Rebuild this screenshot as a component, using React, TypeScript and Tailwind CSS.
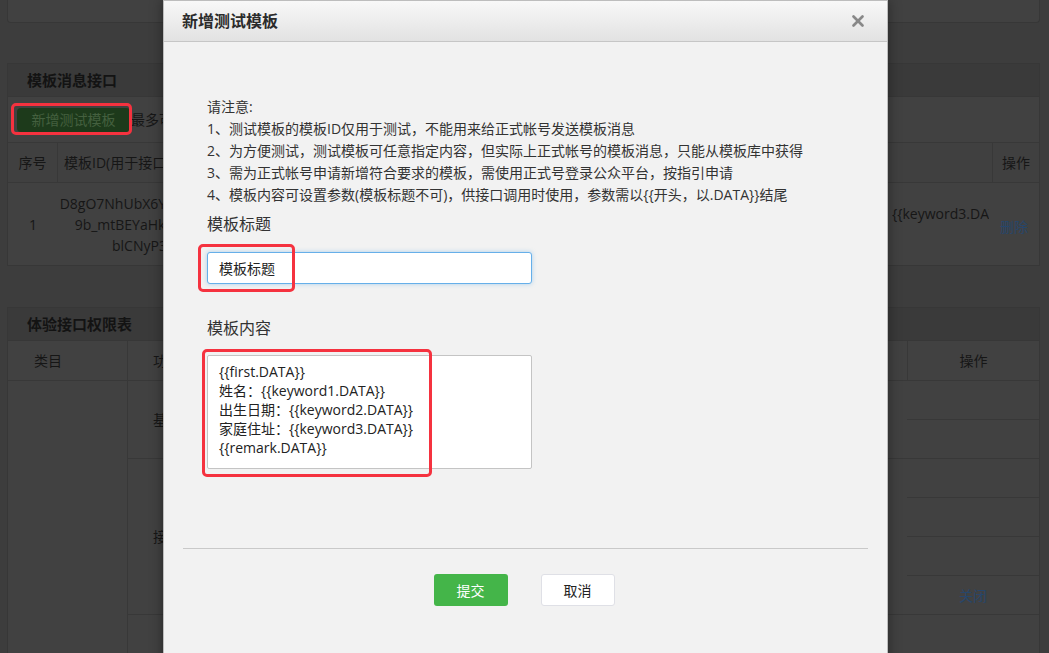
import { X } from 'lucide-react';

const font = { fontFamily: '"Open Sans", "Noto Sans CJK SC", sans-serif' };

// Underlying page (dimmed by the modal's mask)
function BackgroundPage() {
  return (
    <div className="pl-[7px] w-[1040px] text-[14px] text-[#161616]">
      {/* tail of the panel above */}
      <div className="h-[23px] border-x border-b border-[#373737] bg-[#414141] rounded-b-sm" />

      {/* 模板消息接口 */}
      <div className="mt-[40px] border border-[#373737] bg-[#414141]">
        <div className="h-[33px] flex items-center pl-[19px] bg-[#3a3a3a] border-b border-[#373737] font-bold text-[15px] text-[#131313]">
          模板消息接口
        </div>
        <div className="h-[45px] flex items-center pl-[9px]">
          <div className="w-[113px] h-[24px] flex items-center justify-center bg-[#1d3a1b] rounded-sm text-[#44603f] text-[14px]">
            新增测试模板
          </div>
          <span className="ml-[1px]">最多可新增10个测试模板</span>
        </div>
        <div className="flex h-[41px] border-y border-[#383838] bg-[#404040]">
          <div className="w-[50px] flex items-center justify-center border-r border-[#383838]">序号</div>
          <div className="flex-1 flex items-center pl-[6px]">模板ID(用于接口调用)</div>
          <div className="w-[47px] flex items-center justify-center border-l border-[#383838]">操作</div>
        </div>
        <div className="flex h-[82px]">
          <div className="w-[50px] flex items-center justify-center pt-[1px]">1</div>
          <div className="w-[260px] flex flex-col items-center justify-center leading-[21px] pt-[1px] whitespace-nowrap">
            <span>D8gO7NhUbX6Yx0Mo-pqLw3nZk8TrWa</span>
            <span>9b_mtBEYaHkFoR3jUfkzE4TghVs2q</span>
            <span>blCNyP3gdA7xQe2mKo</span>
          </div>
          <div className="flex-1 flex justify-end">
            <div className="w-[97px] overflow-hidden pt-[20px] whitespace-nowrap">{'{{keyword3.DATA}}'}</div>
          </div>
          <div className="w-[50px] flex items-center justify-center pt-[4px] text-[#27466b]">删除</div>
        </div>
      </div>

      {/* 体验接口权限表 */}
      <div className="mt-[41px] border border-[#373737] bg-[#414141]">
        <div className="h-[33px] flex items-center pl-[19px] bg-[#3a3a3a] border-b border-[#373737] font-bold text-[15px] text-[#131313]">
          体验接口权限表
        </div>
        <div className="flex h-[40px] border-b border-[#383838]">
          <div className="w-[120px] flex items-center pl-[26px] border-r border-[#383838]">类目</div>
          <div className="flex-1 flex items-center pl-[25px]">功能</div>
          <div className="w-[132px] flex items-center justify-center border-l border-[#383838]">操作</div>
        </div>
        <div className="flex">
          <div className="w-[120px] border-r border-[#383838]" />
          <div className="flex-1 flex flex-col">
            <div className="h-[78px] flex items-center pl-[25px] border-b border-[#383838]">基础支持</div>
            <div className="h-[156px] flex items-center pl-[25px] border-b border-[#383838]">接收消息</div>
            <div className="h-[60px]" />
          </div>
          <div className="w-[132px] flex flex-col">
            {['', '', '', '', '', '关闭', ''].map((t, i) => (
              <div
                key={i}
                className="h-[39px] flex items-center justify-center border-b border-[#383838] text-[#27466b]"
              >
                {t}
              </div>
            ))}
          </div>
        </div>
      </div>
    </div>
  );
}

function Modal() {
  return (
    <div className="absolute left-[163px] top-0 w-[725px] h-[720px] bg-[#f2f2f2] border border-[#bdbdbd] shadow-[0_0_12px_rgba(0,0,0,0.4)] text-[#333]">
      <div className="h-[41px] flex items-center justify-between px-[18px] bg-gradient-to-b from-[#f8f8f8] to-[#e2e2e2] border-b border-[#c6c6c6]">
        <span className="font-bold text-[16px] text-[#2b2b2b]">新增测试模板</span>
        <X size={18} strokeWidth={3.6} className="text-[#888] mr-[2px]" />
      </div>

      <div className="px-[43px] pt-[54px]">
        <div className="text-[14px] leading-[22px]">
          <p>请注意:</p>
          <p>1、测试模板的模板ID仅用于测试，不能用来给正式帐号发送模板消息</p>
          <p>2、为方便测试，测试模板可任意指定内容，但实际上正式帐号的模板消息，只能从模板库中获得</p>
          <p>3、需为正式帐号申请新增符合要求的模板，需使用正式号登录公众平台，按指引申请</p>
          <p>4、模板内容可设置参数(模板标题不可)，供接口调用时使用，参数需以{'{{'}开头，以.DATA{'}}'}结尾</p>
        </div>

        <div className="mt-[6px] text-[16px] leading-[24px]">模板标题</div>
        <div className="mt-[16px] w-[325px] h-[32px] flex items-center pl-[11px] bg-white border border-[#66afe9] rounded-[3px] shadow-[0_0_4px_rgba(102,175,233,0.5)] text-[14px] text-[#222]">
          模板标题
        </div>

        <div className="mt-[32px] text-[16px] leading-[24px]">模板内容</div>
        <div className="mt-[15px] w-[325px] h-[114px] bg-white border border-[#c4c4c4] rounded-[2px] pl-[11px] pt-[6px] text-[14px] leading-[19px] text-[#222]">
          <p>{'{{first.DATA}}'}</p>
          <p>姓名：{'{{keyword1.DATA}}'}</p>
          <p>出生日期：{'{{keyword2.DATA}}'}</p>
          <p>家庭住址：{'{{keyword3.DATA}}'}</p>
          <p>{'{{remark.DATA}}'}</p>
        </div>
      </div>

      <div className="mx-[19px] mt-[79px] border-t border-[#c9c9c9]" />

      <div className="mt-[25px] flex justify-center gap-[33px] pr-[3px]">
        <div className="w-[74px] h-[32px] flex items-center justify-center rounded-[3px] bg-[#44b549] text-white text-[14px]">
          提交
        </div>
        <div className="w-[74px] h-[32px] flex items-center justify-center rounded-[3px] bg-white border border-[#dfe0e6] text-[14px] text-[#222]">
          取消
        </div>
      </div>
    </div>
  );
}

export default function App() {
  return (
    <div className="relative w-[1049px] h-[653px] overflow-hidden bg-[#3d3d3d]" style={font}>
      <BackgroundPage />
      <Modal />

      {/* red annotation boxes */}
      <div className="absolute left-[11px] top-[103px] w-[121px] h-[32px] border-[3px] border-[#f5323f] rounded-[5px]" />
      <div className="absolute left-[198px] top-[244px] w-[97px] h-[48px] border-[3px] border-[#f5323f] rounded-[5px]" />
      <div className="absolute left-[202px] top-[349px] w-[230px] h-[128px] border-[3px] border-[#f5323f] rounded-[5px]" />
    </div>
  );
}
